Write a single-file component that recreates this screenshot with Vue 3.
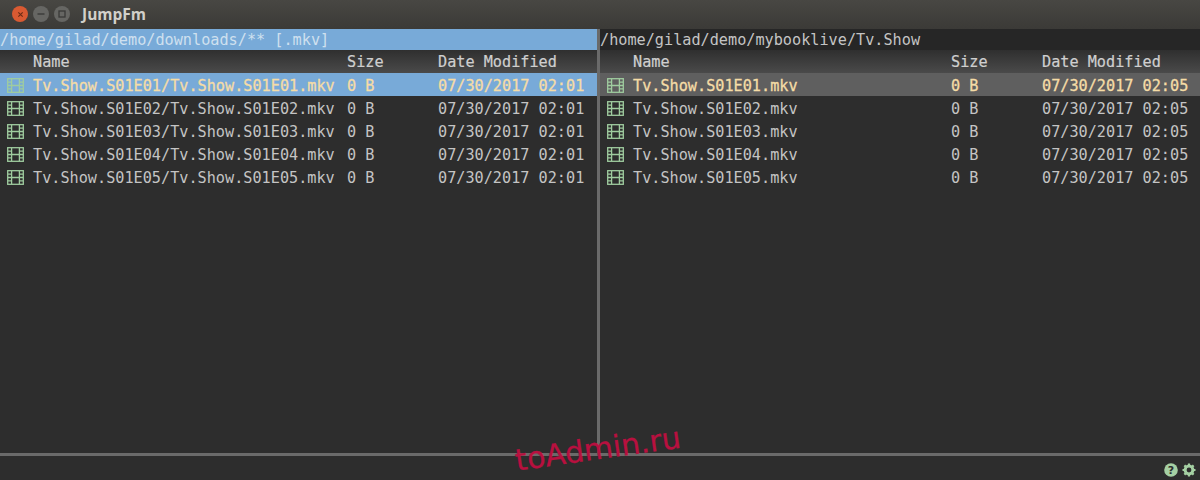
<script setup>
const left = {
  path: '/home/gilad/demo/downloads/** [.mkv]',
  active: true,
  date: '07/30/2017 02:01',
  files: [1, 2, 3, 4, 5].map(n => `Tv.Show.S01E0${n}/Tv.Show.S01E0${n}.mkv`)
}
const right = {
  path: '/home/gilad/demo/mybooklive/Tv.Show',
  active: false,
  date: '07/30/2017 02:05',
  files: [1, 2, 3, 4, 5].map(n => `Tv.Show.S01E0${n}.mkv`)
}
const panels = [left, right]
</script>

<template>
  <div class="window">
    <header class="titlebar">
      <div class="controls">
        <span class="dot close">
          <svg width="7" height="7" viewBox="0 0 8 8"><path d="M1.5 1.5l5 5M6.5 1.5l-5 5" stroke="#6b2c16" stroke-width="1.3" /></svg>
        </span>
        <span class="dot">
          <svg width="8" height="8" viewBox="0 0 8 8"><path d="M0.5 4h7" stroke="#3a3a38" stroke-width="1.4" /></svg>
        </span>
        <span class="dot">
          <svg width="8" height="8" viewBox="0 0 8 8"><rect x="1" y="1" width="6" height="6" fill="none" stroke="#3a3a38" stroke-width="1.3" /></svg>
        </span>
      </div>
      <span class="title">JumpFm</span>
    </header>

    <main class="panels">
      <section v-for="(panel, i) in panels" :key="i" class="panel" :class="{ right: i === 1 }">
        <div class="path" :class="{ active: panel.active }">{{ panel.path }}</div>
        <div class="row head">
          <span></span>
          <span>Name</span>
          <span>Size</span>
          <span>Date Modified</span>
        </div>
        <div
          v-for="(file, j) in panel.files"
          :key="file"
          class="row"
          :class="{ cursor: j === 0, blue: j === 0 && panel.active, grey: j === 0 && !panel.active }"
        >
          <span class="icon">
            <svg width="17" height="15" viewBox="0 0 17 15" fill="none" stroke="currentColor" stroke-width="1.3">
              <rect x="0.7" y="0.7" width="15.6" height="13.6" />
              <path d="M4.6 1v13M12.4 1v13M4.6 7.5h7.8M1 4.2h3.6M1 7.5h3.6M1 10.8h3.6M12.4 4.2h3.6M12.4 7.5h3.6M12.4 10.8h3.6" />
            </svg>
          </span>
          <span>{{ file }}</span>
          <span>0 B</span>
          <span>{{ panel.date }}</span>
        </div>
      </section>
    </main>

    <footer class="status">
      <svg class="status-icon" width="14" height="14" viewBox="0 0 14 14">
        <circle cx="7" cy="7" r="6.8" fill="#a5d0a3" />
        <text x="7" y="11" text-anchor="middle" class="q">?</text>
      </svg>
      <svg class="status-icon" width="14" height="14" viewBox="0 0 14 14">
        <circle cx="7" cy="7" r="3.9" fill="none" stroke="#a5d0a3" stroke-width="3" />
        <path d="M7 0.5v3M7 10.5v3M0.5 7h3M10.5 7h3M2.4 2.4l2.1 2.1M9.5 9.5l2.1 2.1M11.6 2.4L9.5 4.5M4.5 9.5l-2.1 2.1" stroke="#a5d0a3" stroke-width="2.2" />
      </svg>
    </footer>

    <div class="watermark">toAdmin.ru</div>
  </div>
</template>

<style>
html, body { margin: 0; background: #2d2d2d; }
</style>

<style scoped>
.window {
  position: relative;
  width: 1200px;
  height: 480px;
  overflow: hidden;
  display: flex;
  flex-direction: column;
  background: #2d2d2d;
  color: #c4c4c4;
  font-family: "DejaVu Sans Mono", monospace;
  font-size: 15.2px;
}

.titlebar {
  height: 29px;
  flex: none;
  display: flex;
  align-items: center;
  box-sizing: border-box;
  padding: 0 0 1px 12px;
  background: linear-gradient(#484743, #3b3a37);
}

.controls {
  display: flex;
  gap: 5px;
  width: 70px;
}

.dot {
  width: 16px;
  height: 16px;
  border-radius: 50%;
  background: #666663;
  display: flex;
  align-items: center;
  justify-content: center;
}

.dot.close {
  background: #d95a32;
}

.title {
  font-family: "Open Sans", sans-serif;
  font-weight: 700;
  font-size: 15.5px;
  color: #d2d0ca;
}

.panels {
  flex: 1;
  display: grid;
  grid-template-columns: 597px 603px;
  min-height: 0;
}

.panel.right {
  border-left: 3px solid #6a6a6a;
}

.path {
  height: 21px;
  line-height: 23px;
  white-space: nowrap;
  background: #262626;
  color: #c4c4c4;
}

.path.active {
  background: #78aad8;
  color: #cfe0ef;
}

.row {
  height: 23px;
  line-height: 27px;
  display: grid;
  grid-template-rows: 23px;
  grid-template-columns: 33px 314px 91px 1fr;
  white-space: nowrap;
}

.right .row {
  grid-template-columns: 33px 318px 91px 1fr;
}

.row.head {
  line-height: 25px;
  color: #cfcfcf;
  background: linear-gradient(#2f2f2f, #4a4a4a);
  -webkit-text-stroke: 0.2px #cfcfcf;
}

.icon {
  display: flex;
  align-items: center;
  padding: 2px 0 0 7px;
  color: #9fcc9f;
}

.cursor {
  color: #f5dca6;
  -webkit-text-stroke: 0.3px #f5dca6;
}

.blue {
  background: #78aad8;
}

.grey {
  background: #5f5f5f;
}

.status {
  height: 27px;
  flex: none;
  box-sizing: border-box;
  border-top: 3px solid #6a6a6a;
  display: flex;
  justify-content: flex-end;
  align-items: center;
  gap: 4px;
  padding: 4px 4px 0 0;
}

.status-icon {
  display: block;
}

.q {
  font-family: "DejaVu Sans", sans-serif;
  font-size: 11px;
  font-weight: 700;
  fill: #2d2d2d;
}

.watermark {
  position: absolute;
  left: 513px;
  top: 444px;
  font-family: "DejaVu Sans", sans-serif;
  font-size: 30px;
  line-height: 34px;
  color: #b8103f;
  -webkit-text-stroke: 0.3px #b8103f;
  transform: rotate(-8deg);
  transform-origin: left top;
  white-space: nowrap;
}
</style>
